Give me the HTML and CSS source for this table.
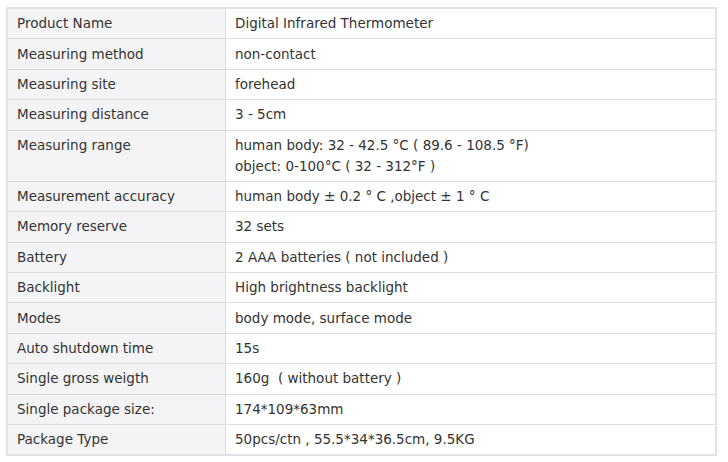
FILE: index.html
```html
<!DOCTYPE html>
<html>
<head>
<meta charset="utf-8">
<link rel="stylesheet" href="styles.css">
</head>
<body>
<table class="spec">
<tbody>
<tr><td class="k">Product Name</td><td class="v">Digital Infrared Thermometer</td></tr>
<tr><td class="k">Measuring method</td><td class="v">non-contact</td></tr>
<tr><td class="k">Measuring site</td><td class="v">forehead</td></tr>
<tr><td class="k">Measuring distance</td><td class="v">3 - 5cm</td></tr>
<tr><td class="k">Measuring range</td><td class="v">human body: 32 - 42.5 °C ( 89.6 - 108.5 °F)<br>object: 0-100°C ( 32 - 312°F )</td></tr>
<tr><td class="k">Measurement accuracy</td><td class="v">human body ± 0.2 ° C ,object ± 1 ° C</td></tr>
<tr><td class="k">Memory reserve</td><td class="v">32 sets</td></tr>
<tr><td class="k">Battery</td><td class="v">2 AAA batteries ( not included )</td></tr>
<tr><td class="k">Backlight</td><td class="v">High brightness backlight</td></tr>
<tr><td class="k">Modes</td><td class="v">body mode, surface mode</td></tr>
<tr><td class="k">Auto shutdown time</td><td class="v">15s</td></tr>
<tr><td class="k">Single gross weigth</td><td class="v">160g &nbsp;( without battery )</td></tr>
<tr><td class="k">Single package size:</td><td class="v">174*109*63mm</td></tr>
<tr><td class="k">Package Type</td><td class="v">50pcs/ctn , 55.5*34*36.5cm, 9.5KG</td></tr>
</tbody>
</table>
</body>
</html>
```

FILE: styles.css
```css
html, body {
  margin: 0;
  background: #ffffff;
}
body {
  padding: 7px 11px 7px 6px;
  font-family: "DejaVu Sans", Verdana, sans-serif;
  font-size: 13.5px;
  color: #333333;
}
.spec {
  width: 711px;
  border-collapse: collapse;
  border: 2px solid #e2e2e6;
}
.spec td {
  border: 1px solid #dcdcdf;
  padding: 4.2px 9px;
  line-height: 21px;
  vertical-align: top;
  text-align: left;
}
.spec .k {
  width: 199px;
  background: #f4f4f6;
}
.spec .v {
  background: #ffffff;
}
```
